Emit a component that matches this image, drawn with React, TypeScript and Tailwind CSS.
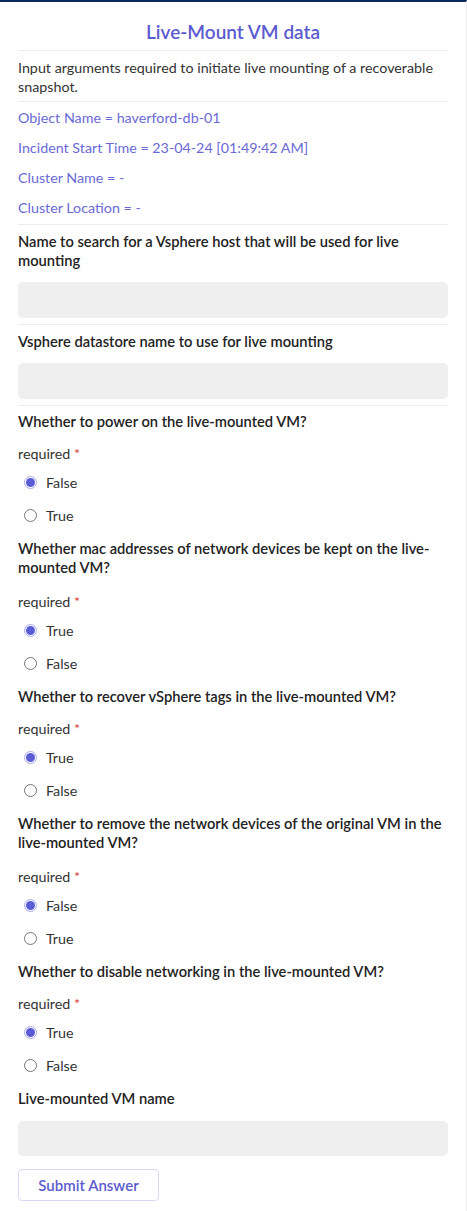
import { useState } from 'react';

const info = [
  'Object Name = haverford-db-01',
  'Incident Start Time = 23-04-24 [01:49:42 AM]',
  'Cluster Name = -',
  'Cluster Location = -',
];

const textFields = [
  'Name to search for a Vsphere host that will be used for live mounting',
  'Vsphere datastore name to use for live mounting',
];

const questions = [
  { label: 'Whether to power on the live-mounted VM?', options: ['False', 'True'], wrap: false },
  { label: 'Whether mac addresses of network devices be kept on the live-mounted VM?', options: ['True', 'False'], wrap: true },
  { label: 'Whether to recover vSphere tags in the live-mounted VM?', options: ['True', 'False'], wrap: false },
  { label: 'Whether to remove the network devices of the original VM in the live-mounted VM?', options: ['False', 'True'], wrap: true },
  { label: 'Whether to disable networking in the live-mounted VM?', options: ['True', 'False'], wrap: false },
];

function Radio({ checked }: { checked: boolean }) {
  return checked ? (
    <span className="flex h-[13px] w-[13px] items-center justify-center rounded-full border border-[#a9a9ec] bg-white">
      <span className="h-[9px] w-[9px] rounded-full bg-[#5b5bd6]" />
    </span>
  ) : (
    <span className="h-[13px] w-[13px] rounded-full border border-[#767676] bg-white" />
  );
}

function Question({ label, options, index, wrap }: { label: string; options: string[]; index: number; wrap: boolean }) {
  const [value, setValue] = useState(options[0]);
  return (
    <div className={index === 0 ? 'pt-[6px]' : 'pt-[7px]'}>
      <p className="text-[14.7px] font-semibold leading-[19px] text-[#222]">{label}</p>
      <p className={`${wrap ? 'mt-[15px]' : 'mt-[13px]'} leading-[19px] text-[#333]`}>
        required <span className="text-[#d9383a]">*</span>
      </p>
      <div className="mt-[3px]">
        {options.map((opt) => (
          <label key={opt} className="flex h-[33px] cursor-pointer items-center gap-[9px] pl-[6px]" onClick={() => setValue(opt)}>
            <input type="radio" name={`q${index}`} className="sr-only" checked={value === opt} readOnly />
            <Radio checked={value === opt} />
            <span className="text-[#333]">{opt}</span>
          </label>
        ))}
      </div>
    </div>
  );
}

export default function App() {
  return (
    <div className="min-h-screen bg-white font-['Lato',sans-serif] text-[14.3px]">
      <div className="border-t-2 border-r border-t-[#0b2a5e] border-r-[#eeeeee] px-[18px] pb-[10px]">
        <h1 className="pt-[18px] pb-[6px] text-center text-[19px] font-semibold leading-[24px] text-[#5b5bd0]">
          Live-Mount VM data
        </h1>
        <div className="h-px bg-[#ececec]" />
        <p className="pt-[7px] pb-[5px] leading-[19px] text-[#333]">
          Input arguments required to initiate live mounting of a recoverable snapshot.
        </p>
        <div className="h-px bg-[#ececec]" />
        <div className="pt-px pb-px">
          {info.map((line) => (
            <p key={line} className="leading-[30px] text-[#6a6ad6]">{line}</p>
          ))}
        </div>
        <div className="h-px bg-[#ececec]" />
        {textFields.map((label) => (
          <div key={label}>
            <div className="pt-[7px] pb-[6px]">
              <p className="text-[14.7px] font-semibold leading-[19px] text-[#222]">{label}</p>
              <input className="mt-[12px] h-[36px] w-full rounded-[5px] bg-[#efefef] px-3 outline-none" />
            </div>
            <div className="h-px bg-[#ececec]" />
          </div>
        ))}
        {questions.map((q, i) => (
          <Question key={q.label} label={q.label} options={q.options} index={i} wrap={q.wrap} />
        ))}
        <div className="pt-[7px]">
          <p className="text-[14.7px] font-semibold leading-[19px] text-[#222]">Live-mounted VM name</p>
          <input className="mt-[13px] h-[35px] w-full rounded-[5px] bg-[#efefef] px-3 outline-none" />
          <button className="mt-[13px] h-[32px] w-[141px] rounded-[4px] border border-[#dcd8f4] bg-white text-[15px] font-semibold text-[#5b5bd0]">
            Submit Answer
          </button>
        </div>
      </div>
    </div>
  );
}
